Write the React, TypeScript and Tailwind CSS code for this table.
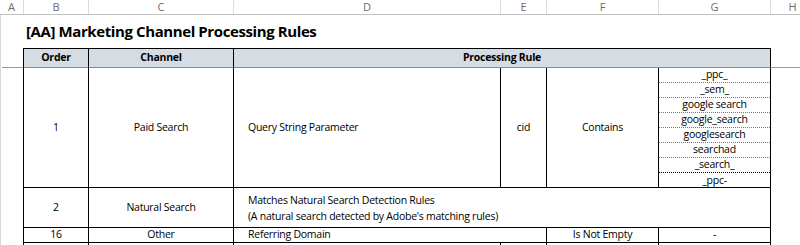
const colLetters = [
  { label: "A", w: "w-[24px]" },
  { label: "B", w: "w-[65px]" },
  { label: "C", w: "w-[145px]" },
  { label: "D", w: "w-[267px]" },
  { label: "E", w: "w-[46px]" },
  { label: "F", w: "w-[112px]" },
  { label: "G", w: "w-[112px]" },
  { label: "H", w: "w-[44px]" },
];

const keywords = [
  "_ppc_",
  "_sem_",
  "google search",
  "google_search",
  "googlesearch",
  "searchad",
  "_search_",
  "_ppc-",
];

const cell = "border-r border-b border-black flex items-center";

const App = () => {
  return (
    <div
      className="w-[800px] h-[245px] overflow-hidden bg-white text-black"
      style={{ fontFamily: '"Open Sans", "Noto Sans", Arial, sans-serif' }}
    >
      {/* sheet column header */}
      <div className="flex h-[15px] border-b border-[#c3c3c3] text-[11px] leading-[14px] text-[#6e6e6e]">
        {colLetters.map((c) => (
          <div
            key={c.label}
            className={`${c.w} shrink-0 border-r border-[#dcdcdc] text-center`}
          >
            {c.label}
          </div>
        ))}
      </div>

      <div className="flex">
        <div className="w-[2px] border-l border-[#d8d8d8]" />
        <div className="flex-1">
          <div className="h-[33px] flex items-center pl-[24px] text-[15px] font-bold tracking-[-0.4px]">
            [AA] Marketing Channel Processing Rules
          </div>

          <div className="flex">
            <div className="w-[21px] shrink-0">
              <div className="h-[20px] border-b border-[#9a9a9a]" />
            </div>

            <div className="w-[748px] shrink-0 border-l border-t border-black grid grid-cols-[65px_145px_267px_46px_112px_112px] grid-rows-[19px_120px_40px_15px_15px] text-[10.5px] tracking-[-0.25px]">
              {/* header */}
              <div className="border-r border-b border-r-black border-b-[#8a8a8a] bg-[#d6dce4] flex items-center justify-center font-bold">
                Order
              </div>
              <div className="border-r border-b border-r-black border-b-[#8a8a8a] bg-[#d6dce4] flex items-center justify-center font-bold">
                Channel
              </div>
              <div className="col-span-4 border-r border-b border-r-black border-b-[#8a8a8a] bg-[#d6dce4] flex items-center justify-center font-bold">
                Processing Rule
              </div>

              {/* row 1 */}
              <div className={`${cell} justify-center`}>1</div>
              <div className={`${cell} justify-center`}>Paid Search</div>
              <div className={`${cell} pl-[14px]`}>Query String Parameter</div>
              <div className={`${cell} justify-center`}>cid</div>
              <div className={`${cell} justify-center`}>Contains</div>
              <div className="border-r border-b border-black flex flex-col">
                {keywords.map((k, i) => (
                  <div
                    key={k}
                    className={
                      i === keywords.length - 1
                        ? "flex-1 flex items-center justify-center"
                        : i === keywords.length - 2
                          ? "h-[15px] shrink-0 border-b border-dotted border-black flex items-center justify-center"
                          : "h-[15px] shrink-0 border-b border-dotted border-[#7a7a7a] flex items-center justify-center"
                    }
                  >
                    {k}
                  </div>
                ))}
              </div>

              {/* row 2 */}
              <div className={`${cell} justify-center`}>2</div>
              <div className={`${cell} justify-center`}>Natural Search</div>
              <div className="col-span-4 border-r border-b border-black flex flex-col justify-center pl-[14px] leading-[16px]">
                <span>Matches Natural Search Detection Rules</span>
                <span>(A natural search detected by Adobe's matching rules)</span>
              </div>

              {/* row 16 */}
              <div className={`${cell} justify-center`}>16</div>
              <div className={`${cell} justify-center`}>Other</div>
              <div className={`${cell} col-span-2 pl-[14px]`}>Referring Domain</div>
              <div className={`${cell} justify-center`}>Is Not Empty</div>
              <div className={`${cell} justify-center`}>-</div>

              {/* next row (cut off) */}
              <div className={cell} />
              <div className={cell} />
              <div className={cell} />
              <div className={cell} />
              <div className={cell} />
              <div className={cell} />
            </div>

            <div className="flex-1">
              <div className="h-[20px] border-b border-[#9a9a9a]" />
            </div>
          </div>
        </div>
      </div>
    </div>
  );
};

export default App;
